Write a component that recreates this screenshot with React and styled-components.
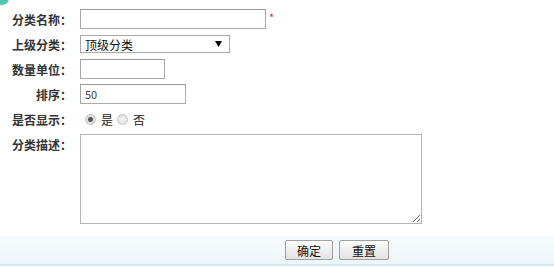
import React from "react";
import styled, { createGlobalStyle } from "styled-components";

const GlobalStyle = createGlobalStyle`
  html, body {
    margin: 0;
    padding: 0;
    background: #fff;
    font-family: "Noto Sans CJK SC", "Liberation Sans", sans-serif;
    font-size: 12px;
    color: #333;
  }
`;

const Page = styled.div`
  position: relative;
  width: 554px;
  height: 267px;
  overflow: hidden;
`;

const CornerIcon = styled.svg`
  position: absolute;
  left: -6px;
  top: -10px;
`;

const Form = styled.div`
  display: grid;
  grid-template-columns: 72px auto;
  column-gap: 8px;
  row-gap: 5px;
  padding-top: 9px;
`;

const Label = styled.div`
  display: flex;
  align-items: ${({ top }) => (top ? "flex-start" : "center")};
  justify-content: flex-end;
  padding-top: ${({ top }) => (top ? "2px" : "0")};
  height: ${({ top }) => (top ? "auto" : "20px")};
  font-weight: bold;
  font-size: 12px;
  color: #333;
  white-space: nowrap;
`;

const Field = styled.div`
  display: flex;
  align-items: center;
  min-height: 20px;
`;

const TextInput = styled.input`
  box-sizing: border-box;
  width: ${({ w }) => w}px;
  height: 20px;
  margin: 0;
  padding: 0 4px;
  border: 1px solid #a9a9a9;
  border-top-color: #999;
  font-family: "Noto Sans CJK SC", "Liberation Sans", sans-serif;
  font-size: 11px;
  color: #444;
  outline: none;
`;

const Required = styled.span`
  color: #e0263d;
  font-size: 11px;
  margin-left: 3px;
  margin-top: -4px;
`;

const SelectWrap = styled.div`
  position: relative;
  width: 150px;
  height: 18px;
`;

const Select = styled.select`
  appearance: none;
  box-sizing: border-box;
  width: 150px;
  height: 18px;
  margin: 0;
  padding: 0 0 0 4px;
  border: 1px solid #a9a9a9;
  border-radius: 0;
  background: #fff;
  font-family: "Noto Sans CJK SC", "Liberation Sans", sans-serif;
  font-size: 12px;
  color: #111;
  outline: none;
`;

const Arrow = styled.svg`
  position: absolute;
  right: 8px;
  top: 6px;
  pointer-events: none;
`;

const RadioLabel = styled.label`
  display: flex;
  align-items: center;
  margin-left: ${({ first }) => (first ? "5px" : "4px")};
  font-size: 12px;
  color: #222;
`;

const Radio = styled.input`
  appearance: none;
  box-sizing: border-box;
  width: 11px;
  height: 11px;
  margin: 0 5px 0 0;
  border-radius: 50%;
  border: 1px solid #c4c4c4;
  background: radial-gradient(circle, #f4f4f4 0%, #dcdcdc 100%);
  &:checked {
    background: radial-gradient(circle, #555 0 2px, #e2e2e2 3px, #d4d4d4 100%);
  }
`;

const TextArea = styled.textarea`
  box-sizing: border-box;
  width: 342px;
  height: 90px;
  margin: 0;
  border: 1px solid #b5b5b5;
  font-family: "Noto Sans CJK SC", "Liberation Sans", sans-serif;
  font-size: 12px;
  outline: none;
`;

const Footer = styled.div`
  display: flex;
  gap: 6px;
  margin-top: 12px;
  padding: 4px 0 4px 285px;
  background: linear-gradient(#f6fafc, #eef6f9);
  border-bottom: 2px solid #cfe5ee;
`;

const Button = styled.button`
  box-sizing: border-box;
  width: ${({ w }) => w}px;
  height: 20px;
  margin: 0;
  padding: 0;
  border: 1px solid #a0a0a0;
  border-radius: 2px;
  background: linear-gradient(#fbfbfb, #e3e3e3);
  font-family: "Noto Sans CJK SC", "Liberation Sans", sans-serif;
  font-size: 12px;
  color: #111;
`;

export default function App() {
  return (
    <Page>
      <GlobalStyle />
      <CornerIcon width="16" height="16" viewBox="0 0 16 16">
        <circle cx="8" cy="8" r="7" fill="#4cc6ad" />
      </CornerIcon>
      <Form>
        <Label>分类名称：</Label>
        <Field>
          <TextInput w={186} />
          <Required>*</Required>
        </Field>

        <Label>上级分类：</Label>
        <Field>
          <SelectWrap>
            <Select defaultValue="0">
              <option value="0">顶级分类</option>
            </Select>
            <Arrow width="7" height="6" viewBox="0 0 7 6">
              <path d="M0 0 H7 L3.5 6 Z" fill="#000" />
            </Arrow>
          </SelectWrap>
        </Field>

        <Label>数量单位：</Label>
        <Field>
          <TextInput w={85} />
        </Field>

        <Label>排序：</Label>
        <Field>
          <TextInput w={106} defaultValue="50" />
        </Field>

        <Label>是否显示：</Label>
        <Field>
          <RadioLabel first>
            <Radio type="radio" name="show" defaultChecked />是
          </RadioLabel>
          <RadioLabel>
            <Radio type="radio" name="show" />否
          </RadioLabel>
        </Field>

        <Label top>分类描述：</Label>
        <Field>
          <TextArea />
        </Field>
      </Form>
      <Footer>
        <Button w={48}>确定</Button>
        <Button w={50}>重置</Button>
      </Footer>
    </Page>
  );
}
